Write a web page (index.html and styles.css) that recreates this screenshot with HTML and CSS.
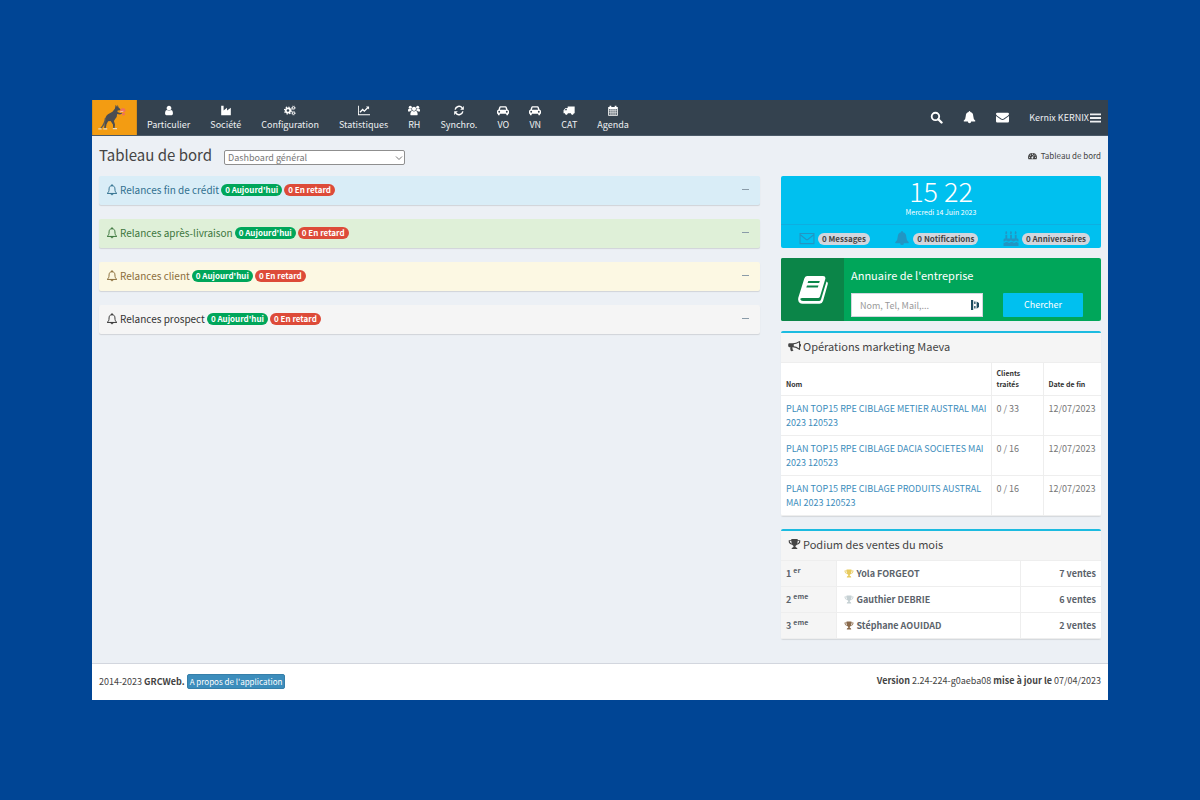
FILE: index.html
```html
<!DOCTYPE html>
<html lang="fr">
<head>
<meta charset="utf-8">
<title>GRCWeb - Tableau de bord</title>
<link rel="stylesheet" href="styles.css">
</head>
<body>
<svg class="sprite" aria-hidden="true">
  <symbol id="user" viewBox="0 0 1792 1792"><path d="M1536 1399q0 109-62.500 187t-150.500 78h-854q-88 0-150.500-78t-62.500-187q0-85 8.500-160.500t31.500-152 58.500-131 94-89 134.500-34.500q131 128 313 128t313-128q76 0 134.500 34.500t94 89 58.500 131 31.500 152 8.500 160.500zm-256-887q0 159-112.500 271.500t-271.500 112.500-271.500-112.500-112.500-271.500 112.500-271.500 271.500-112.500 271.500 112.500 112.500 271.500z"/></symbol>
  <symbol id="industry" viewBox="0 0 16 16"><path d="M1 1h3.500v7L9.500 4v4l5.500-4v11H1z"/></symbol>
  <symbol id="cogs" viewBox="0 0 18 16"><g fill="none" stroke="currentColor"><circle cx="6" cy="8" r="3.300" stroke-width="2.600"/><circle cx="6" cy="8" r="5.200" stroke-width="1.800" stroke-dasharray="2.040 2.040"/><circle cx="14.200" cy="4" r="1.700" stroke-width="1.500"/><circle cx="14.200" cy="4" r="2.800" stroke-width="1" stroke-dasharray="1.250 1.250"/><circle cx="14.200" cy="12" r="1.700" stroke-width="1.500"/><circle cx="14.200" cy="12" r="2.800" stroke-width="1" stroke-dasharray="1.250 1.250"/></g></symbol>
  <symbol id="chart" viewBox="0 0 18 16"><path d="M0 1h1.300v12.700H18V15H0z"/><path d="M3 10.500l4-4 2.500 2.500L14.500 4" fill="none" stroke="currentColor" stroke-width="2"/><path d="M12 2h4.600v4.600z"/></symbol>
  <symbol id="users" viewBox="0 0 18 16"><circle cx="9" cy="5.500" r="3.100"/><circle cx="3.500" cy="3.200" r="2.300"/><circle cx="14.500" cy="3.200" r="2.300"/><path d="M4 15q-1-1 0-4 .8-2.500 2.600-2.500Q9 10.500 11.400 8.500q1.800 0 2.600 2.500 1 3 0 4zM0 9q-.2-4 1.800-4 1.600 1 3.200.4.100 1.900 1 2.700-2 .1-2.900 1.400H1q-1 0-1-.5zM18 9q.2-4-1.800-4-1.600 1-3.200.4-.1 1.900-1 2.700 2 .1 2.900 1.400H17q1 0 1-.5z"/></symbol>
  <symbol id="refresh" viewBox="0 0 16 16"><path d="M2.400 6.700A5.800 5.800 0 0 1 12.500 4M13.600 9.300A5.800 5.800 0 0 1 3.500 12" fill="none" stroke="currentColor" stroke-width="2.100"/><path d="M15 1.500v5.300H9.700zM1 14.500V9.200h5.300z"/></symbol>
  <symbol id="car" viewBox="0 0 18 16"><path fill-rule="evenodd" d="M2 7l1.500-4.400Q3.900 1.500 5 1.500h8q1.100 0 1.500 1.100L16 7q2 .2 2 2v3.700h-1.300V14q0 1.300-1.400 1.300T13.900 14v-1.300H4.100V14q0 1.300-1.400 1.300T1.300 14v-1.300H0V9q0-1.800 2-2zm2.300 0h9.400l-1.100-3.500H5.400zM3.300 8.400a1.400 1.400 0 1 0 0 2.800 1.400 1.400 0 0 0 0-2.800zm11.400 0a1.400 1.400 0 1 0 0 2.800 1.400 1.400 0 0 0 0-2.800z"/></symbol>
  <symbol id="truck" viewBox="0 0 18 16"><path fill-rule="evenodd" d="M7 2h10.500v10H16a2 2 0 0 1-4 0H7a2 2 0 0 1-4 0H.8V7.500l3-3.300H7zM5.700 5.500H4.300L2.200 7.800h3.500z"/><circle cx="5" cy="12.500" r="1.700"/><circle cx="14" cy="12.500" r="1.700"/></symbol>
  <symbol id="calendar" viewBox="0 0 16 16"><path fill-rule="evenodd" d="M1 3h2V1h2.500v2h5V1H13v2h2v12.500H1zM2.200 6v2H4.500V6zm3.300 0v2h2V6zm3 0v2h2V6zm3 0v2h2.300V6zM2.200 9v2h2.300V9zm3.300 0v2h2V9zm3 0v2h2V9zm3 0v2h2.300V9zM2.200 12v2.300h2.300V12zm3.300 0v2.300h2V12zm3 0v2.300h2V12zm3 0v2.300h2.300V12z"/></symbol>
  <symbol id="search" viewBox="0 0 16 16"><circle cx="6.700" cy="6.700" r="4.600" fill="none" stroke="currentColor" stroke-width="2.300"/><path d="M10.200 10.200l4 4" stroke="currentColor" stroke-width="2.900" stroke-linecap="round"/></symbol>
  <symbol id="bell" viewBox="0 0 16 16"><path d="M8 0q1 0 1 1.300 3.500.8 3.600 5 .1 4.200 2.600 5.800.3.900-.7.900H10a2 2 0 0 1-4 0H1.500q-1 0-.7-.9 2.500-1.600 2.600-5.800.1-4.200 3.600-5Q7 0 8 0z"/></symbol>
  <symbol id="bell-o" viewBox="0 0 16 16"><path d="M8 2.200c-3 0-3.900 2-3.900 4.400 0 3.200-.9 4.800-2.500 6h12.800c-1.600-1.200-2.500-2.800-2.500-6 0-2.400-.9-4.400-3.900-4.400zM8 2V.7M6.500 13a1.500 1.500 0 0 0 3 0" fill="none" stroke="currentColor" stroke-width="1.300" stroke-linejoin="round" stroke-linecap="round"/></symbol>
  <symbol id="envelope" viewBox="0 0 16 16"><path d="M0 3.800Q0 2 1.500 2h13Q16 2 16 3.800q0 1-1.400 2L9.200 9.500Q8 10.200 6.800 9.500L1.400 5.800Q0 4.800 0 3.800zM0 6.200l6 4.200q2 1.200 4 0l6-4.200v6.300q0 1.500-1.500 1.500h-13Q0 14 0 12.500z"/></symbol>
  <symbol id="envelope-o" viewBox="0 0 16 16"><path d="M.6 2.600h14.800v10.800H.6zM.8 4l6 4.800q1.200.9 2.400 0l6-4.800" fill="none" stroke="currentColor" stroke-width="1.200"/></symbol>
  <symbol id="bars" viewBox="0 0 12 11"><path d="M0 1h12v2H0zM0 5h12v2H0zM0 9h12v2H0z"/></symbol>
  <symbol id="gauge" viewBox="0 0 18 16"><path fill-rule="evenodd" d="M9 2a9 9 0 0 1 9 8.500q0 2.100-1 4H1q-1-1.900-1-4A9 9 0 0 1 9 2zM3 9.300a1.200 1.200 0 1 0 0 2.400 1.200 1.200 0 0 0 0-2.400zm1.800-4.400a1.200 1.200 0 1 0 0 2.400 1.200 1.200 0 0 0 0-2.400zM9 3.200a1.200 1.200 0 1 0 0 2.400 1.200 1.200 0 0 0 0-2.400zm1.600 3.300l-1.900 3a1.900 1.900 0 1 0 1.300.5l1.600-3zM13.800 5a1.100 1.100 0 1 0 0 2.200 1.100 1.100 0 0 0 0-2.200zM15 9.300a1.200 1.200 0 1 0 0 2.400 1.200 1.200 0 0 0 0-2.400z"/></symbol>
  <symbol id="cake" viewBox="0 0 16 16"><path d="M0 12.600q1.300 0 2-.7 1.300-1 2.600 0 1.400 1.200 2.800 0 1.300-1 2.600 0 1.400 1.200 2.800 0 1.200-.7 1.800 0 .6.700 1.400.7V16H0zM0 9.500Q0 8 1.500 8H2V4h2v4h3V4h2v4h3V4h2v4h.5Q16 8 16 9.500v1.800q-.8 0-1.300-.6-1.300-1-2.600 0-1.400 1.200-2.800 0-1.300-1-2.600 0-1.400 1.200-2.800 0-1.300-1-2.200 0Q.9 11.300 0 11.300zM3 0q1 1.300 1 2T3 3.200 2 2t1-2zM8 0q1 1.300 1 2T8 3.200 7 2t1-2zM13 0q1 1.300 1 2t-1 1.200T12 2t1-2z"/></symbol>
  <symbol id="book" viewBox="0 0 30 28"><path fill-rule="evenodd" d="M9 0h16q3 0 2.300 3L22 20.500Q21.400 22 20 22H4.500Q2 22 2.300 23.300 2.600 25 5 25h16q1.500 0 2-1.500L28.500 5.500q1.600.8 1.300 2.500L25 25q-.8 2.800-3.500 2.800H4.500Q.8 27.800.2 24-.1 22 1 19.500L6.300 2.500Q7 0 9 0zm1.300 5l-.7 2h11.500l.7-2zM9 9.500l-.7 2h11.500l.7-2z"/></symbol>
  <symbol id="horn" viewBox="0 0 18 16"><path fill-rule="evenodd" d="M16 1q.8 0 .8.900v3.300a1.700 1.700 0 0 1 0 3.400v4q0 1-.8.900Q11 9.700 6.500 9.800q-1 1 0 1.900-.7 1.200 1.200 2.300-1 1.600-3.700.9Q2.500 11.500 3.500 9.600H2Q.3 9.600.3 8V5.900Q.3 4.300 2 4.300h4.500Q11 4.300 16 1zm-.8 2.200Q11.500 5.500 8 5.700v2.700q3.500.3 7.200 2.700z"/></symbol>
  <symbol id="trophy" viewBox="0 0 18 16"><path fill-rule="evenodd" d="M4.600 1h8.800v1.700H17V4.500Q17 8 12.300 8.900q-1.300 1.100-2 1.900-.2 1.700 1.200 1.900 1.500.3 1.500 2.300H5q0-2 1.500-2.300 1.400-.2 1.200-1.900-.7-.8-2-1.900Q1 8 1 4.500V2.700h3.600zM2.400 4q0 2.600 3 3.500-.7-1.400-.8-3.500zm13.200 0h-2.200q-.1 2.100-.8 3.500 3-.9 3-3.500z"/></symbol>
</svg>

<div class="app">
  <header class="topbar">
    <a class="logo" href="#" aria-label="Accueil">
      <svg viewBox="0 0 46 36"><rect width="46" height="36" fill="#f39c12"/><path d="M24.200 5l1.500 2.200.6-2.200.9 2.800 2 1.800-.3.900-2.700.3-.2 1.600 2.700 1 2-.4.300.9-2.300 1-3-.4q.2 3-2 5l-1.300 2 1.100 3.600-.4 4h-1.400l-.3-3.800-2.400-3.600-2.600.1-1.600 3.200-.8 4h-1.600l.3-4.400.6-3.400q-.1-4.300 3-6.600l4.600-2.400 2.600-3.400z" fill="#4b4d52"/><path d="M13.800 18.500q-.8 6.500-4.800 10.500" fill="none" stroke="#5c5a55" stroke-width="1.500"/><path d="M6.300 29.600h3.500M11.500 29.600h4M21.300 29.400h4.300" stroke="#ead9bf" stroke-width="1.300"/><path d="M28.500 10.500l2.300-2.300 3 .8.600 2.500-2.400 1.300zM30.300 14l3.200-.9.200 2.200-2.200.9z" fill="#f0705c"/><path d="M28.800 12.200l3.300-.7" stroke="#f8c4ae"/></svg>
    </a>
    <nav class="menu">
      <a href="#"><svg><use href="#user"/></svg>Particulier</a>
      <a href="#"><svg><use href="#industry"/></svg>Société</a>
      <a href="#"><svg><use href="#cogs"/></svg>Configuration</a>
      <a href="#"><svg><use href="#chart"/></svg>Statistiques</a>
      <a href="#"><svg><use href="#users"/></svg>RH</a>
      <a href="#"><svg><use href="#refresh"/></svg>Synchro.</a>
      <a href="#"><svg><use href="#car"/></svg>VO</a>
      <a href="#"><svg><use href="#car"/></svg>VN</a>
      <a href="#"><svg><use href="#truck"/></svg>CAT</a>
      <a href="#"><svg><use href="#calendar"/></svg>Agenda</a>
    </nav>
    <div class="tools">
      <a href="#" aria-label="Rechercher"><svg><use href="#search"/></svg></a>
      <a href="#" aria-label="Notifications"><svg><use href="#bell"/></svg></a>
      <a href="#" aria-label="Messages"><svg><use href="#envelope"/></svg></a>
      <a class="account" href="#">Kernix KERNIX<svg><use href="#bars"/></svg></a>
    </div>
  </header>

  <div class="heading">
    <h1>Tableau de bord</h1>
    <div class="picker">
      <select aria-label="Tableau de bord"><option>Dashboard général</option></select>
      <svg viewBox="0 0 8 6"><path d="M1 1.500l3 3 3-3"/></svg>
    </div>
    <a class="crumb" href="#"><svg><use href="#gauge"/></svg>Tableau de bord</a>
  </div>

  <main class="columns">
    <div class="reminders">
      <section class="reminder info"><svg><use href="#bell-o"/></svg><h2>Relances fin de crédit</h2><span class="badge green">0 Aujourd'hui</span><span class="badge red">0 En retard</span><button class="fold" aria-label="Réduire"></button></section>
      <section class="reminder success"><svg><use href="#bell-o"/></svg><h2>Relances après-livraison</h2><span class="badge green">0 Aujourd'hui</span><span class="badge red">0 En retard</span><button class="fold" aria-label="Réduire"></button></section>
      <section class="reminder warning"><svg><use href="#bell-o"/></svg><h2>Relances client</h2><span class="badge green">0 Aujourd'hui</span><span class="badge red">0 En retard</span><button class="fold" aria-label="Réduire"></button></section>
      <section class="reminder plain"><svg><use href="#bell-o"/></svg><h2>Relances prospect</h2><span class="badge green">0 Aujourd'hui</span><span class="badge red">0 En retard</span><button class="fold" aria-label="Réduire"></button></section>
    </div>

    <aside class="side">
      <section class="clock">
        <div class="now"><div class="time">15 22</div><div class="date">Mercredi 14 Juin 2023</div></div>
        <div class="counts">
          <a href="#"><svg><use href="#envelope-o"/></svg><span class="badge gray">0 Messages</span></a>
          <a href="#"><svg><use href="#bell"/></svg><span class="badge gray">0 Notifications</span></a>
          <a href="#"><svg><use href="#cake"/></svg><span class="badge gray">0 Anniversaires</span></a>
        </div>
      </section>

      <section class="directory">
        <div class="book"><svg><use href="#book"/></svg></div>
        <form class="lookup">
          <label for="who">Annuaire de l'entreprise</label>
          <div class="line">
            <div class="field">
              <input id="who" type="text" placeholder="Nom, Tel, Mail,...">
              <svg viewBox="0 0 8 10"><path d="M0 0h2.200v10H0zM3.200 1.500h1.300v2.600H3.200zM3.200 5.900h1.300v2.600H3.200zM5.600 1.500L8 3v4L5.600 8.700z"/></svg>
            </div>
            <button type="button">Chercher</button>
          </div>
        </form>
      </section>

      <section class="box">
        <h2><svg><use href="#horn"/></svg>Opérations marketing Maeva</h2>
        <table class="campaigns">
          <thead><tr><th class="name">Nom</th><th class="treated">Clients traités</th><th class="end">Date de fin</th></tr></thead>
          <tbody>
            <tr><td><a href="#">PLAN TOP15 RPE CIBLAGE METIER AUSTRAL MAI 2023 120523</a></td><td>0 / 33</td><td>12/07/2023</td></tr>
            <tr><td><a href="#">PLAN TOP15 RPE CIBLAGE DACIA SOCIETES MAI 2023 120523</a></td><td>0 / 16</td><td>12/07/2023</td></tr>
            <tr><td><a href="#">PLAN TOP15 RPE CIBLAGE PRODUITS AUSTRAL MAI 2023 120523</a></td><td>0 / 16</td><td>12/07/2023</td></tr>
          </tbody>
        </table>
      </section>

      <section class="box podium">
        <h2><svg><use href="#trophy"/></svg>Podium des ventes du mois</h2>
        <table class="ranks">
          <tbody>
            <tr><th class="rank">1 <sup>er</sup></th><td><svg class="gold"><use href="#trophy"/></svg>Yola FORGEOT</td><td class="sales">7 ventes</td></tr>
            <tr><th class="rank">2 <sup>eme</sup></th><td><svg class="silver"><use href="#trophy"/></svg>Gauthier DEBRIE</td><td class="sales">6 ventes</td></tr>
            <tr><th class="rank">3 <sup>eme</sup></th><td><svg class="bronze"><use href="#trophy"/></svg>Stéphane AOUIDAD</td><td class="sales">2 ventes</td></tr>
          </tbody>
        </table>
      </section>
    </aside>
  </main>

  <footer class="footer">
    <div>2014-2023 <b>GRCWeb.</b> <a class="about" href="#">A propos de l'application</a></div>
    <div><b>Version</b> 2.24-224-g0aeba08 <b>mise à jour le</b> 07/04/2023</div>
  </footer>
</div>
</body>
</html>
```

FILE: styles.css
```css
* { box-sizing: border-box; }
body {
  margin: 0;
  min-height: 100vh;
  padding: 100px 92px;
  display: flex;
  background: #004595;
  color: #444;
  font: 9px/14px "Noto Sans CJK JP", "Noto Sans", sans-serif;
}
a { color: inherit; text-decoration: none; }
h1, h2 { margin: 0; font-weight: 400; }
svg { fill: currentColor; flex: none; }
button, input, select { font: inherit; }
.sprite { position: absolute; width: 0; height: 0; }
.app { flex: 1; min-width: 0; display: flex; flex-direction: column; background: #ecf0f5; }

.topbar { display: flex; height: 36px; background: #34424f; color: #fff; border-bottom: 1px solid #4b5a68; }
.logo { width: 45px; }
.logo svg { display: block; width: 45px; height: 35px; }
.menu { display: flex; gap: 20px; padding: 5px 10px 0; }
.menu a { display: flex; flex-direction: column; align-items: center; gap: 2px; color: #eef0f2; }
.menu svg { width: 12px; height: 11px; color: #fff; }
.tools { margin-left: auto; display: flex; align-items: center; gap: 20px; padding-right: 7px; }
.tools a { display: flex; align-items: center; }
.tools svg { width: 13px; height: 13px; }
.tools .account { gap: 1px; color: #eef0f2; }
.account svg { width: 11px; height: 11px; }

.heading { display: flex; align-items: center; height: 40px; padding: 0 7px 2px; gap: 12px; }
.heading h1 { font-size: 15px; line-height: 20px; }
.picker { position: relative; width: 181px; height: 15px; margin-top: 4px; }
.picker select { appearance: none; display: block; width: 100%; height: 15px; padding: 0 3px; border: 1px solid #8f8f8f; border-radius: 2px; background: #fff; color: #777; line-height: 13px; }
.picker svg { position: absolute; right: 2px; top: 5px; width: 8px; height: 6px; fill: none; stroke: #777; }
.crumb { margin: 2px 0 0 auto; display: flex; align-items: center; gap: 4px; font-size: 8px; }
.crumb svg { width: 9px; height: 8px; }

.columns { flex: 1; display: grid; grid-template-columns: minmax(0, 1fr) 320px; gap: 21px; padding: 0 7px 20px; align-items: start; }
.reminders { display: grid; gap: 14px; }
.reminder { display: flex; align-items: center; height: 29px; padding: 0 10px 2px 7px; border-radius: 2px; box-shadow: 0 1px 1px rgba(0, 0, 0, .12); }
.reminder > svg { width: 12px; height: 12px; margin-right: 2px; }
.reminder h2 { font-size: 10px; line-height: 16px; margin-right: 2px; }
.info { background: #d9edf7; color: #31708f; }
.success { background: #dff0d8; color: #3c763d; }
.warning { background: #fcf8e3; color: #8a6d3b; }
.plain { background: #f5f5f5; color: #333; }
.badge { display: inline-block; padding: 0 4px; border-radius: 6px; font-size: 8px; font-weight: 700; line-height: 12px; color: #fff; }
.green { background: #00a65a; margin-right: 2px; }
.red { background: #dd4b39; }
.gray { background: #d2d6de; color: #444; }
.fold { margin-left: auto; width: 9px; height: 9px; padding: 0; border: 0; background: linear-gradient(#8a9ba8, #8a9ba8) center / 7px 1px no-repeat; }

.side { display: grid; }
.clock { margin-bottom: 10px; border-radius: 2px; background: #00c0ef; text-align: center; color: #fff; }
.now { height: 49px; border-bottom: 1px solid #0eaee0; }
.time { font-size: 27px; font-weight: 300; line-height: 30px; }
.date { font-size: 7px; line-height: 12px; }
.counts { display: flex; justify-content: space-between; height: 23px; padding: 4px 11px 0 18px; }
.counts a { display: flex; align-items: center; gap: 3px; }
.counts svg { width: 16px; height: 15px; color: #2196c4; }

.directory { display: flex; height: 63px; margin-bottom: 10px; border-radius: 2px; background: #00a65a; color: #fff; overflow: hidden; }
.book { display: flex; align-items: center; justify-content: center; width: 63px; background: #0b8548; }
.book svg { width: 30px; height: 28px; }
.lookup { flex: 1; padding: 9px 18px 0 7px; }
.lookup label { display: block; font-size: 11px; line-height: 16px; }
.line { display: flex; justify-content: space-between; margin-top: 10px; }
.field { position: relative; width: 132px; }
.field input { display: block; width: 100%; height: 24px; padding: 0 8px; border: 1px solid #d2d6de; background: #fff; color: #555; }
.field input::placeholder { color: #999; }
.field svg { position: absolute; right: 4px; top: 7px; width: 8px; height: 10px; fill: #1d4c60; }
.line button { width: 80px; height: 24px; padding: 0; border: 0; border-radius: 1px; background: #00c0ef; color: #fff; }

.box { margin-bottom: 13px; border-top: 2px solid #1cbbe0; border-radius: 2px; background: #fff; box-shadow: 0 1px 1px rgba(0, 0, 0, .1); }
.podium { margin-bottom: 0; }
.box h2 { display: flex; align-items: center; gap: 2px; height: 29px; padding: 0 7px 3px; background: #f5f5f5; font-size: 11px; line-height: 16px; }
.box h2 svg { width: 13px; height: 12px; }
.box table { width: 100%; border-collapse: collapse; table-layout: fixed; }
.box th, .box td { border: 1px solid #eee; padding: 5px; text-align: left; }
.box tr > :first-child { border-left: 0; }
.box tr > :last-child { border-right: 0; }
.campaigns th { font-size: 7px; line-height: 11px; vertical-align: bottom; color: #333; }
.campaigns td { vertical-align: top; color: #777; }
.campaigns td, .campaigns .name { padding-right: 3px; }
.campaigns td { padding-top: 6px; }
.campaigns .treated { width: 52px; }
.campaigns .end { width: 58px; }
.ranks th, .ranks td { padding-top: 6px; font-weight: 700; color: #5c636b; }
.ranks .rank { width: 55px; background: #f5f5f5; }
.ranks sup { font-size: 7px; line-height: 0; }
.ranks svg { width: 10px; height: 9px; margin: 0 3px 0 2px; vertical-align: -1px; }
.ranks .sales { width: 81px; text-align: right; }
.campaigns a { color: #3c8dbc; }
.ranks .gold { color: #e8cb5f; }
.ranks .silver { color: #c5d0d3; }
.ranks .bronze { color: #8a6a4c; }

.footer { display: flex; justify-content: space-between; align-items: center; height: 37px; padding: 0 7px 2px; border-top: 1px solid #d2d6de; background: #fff; }
.about { display: inline-block; padding: 0 2px; border: 1px solid #367fa9; border-radius: 2px; background: #3c8dbc; color: #fff; font-size: 8px; line-height: 13px; }
```
